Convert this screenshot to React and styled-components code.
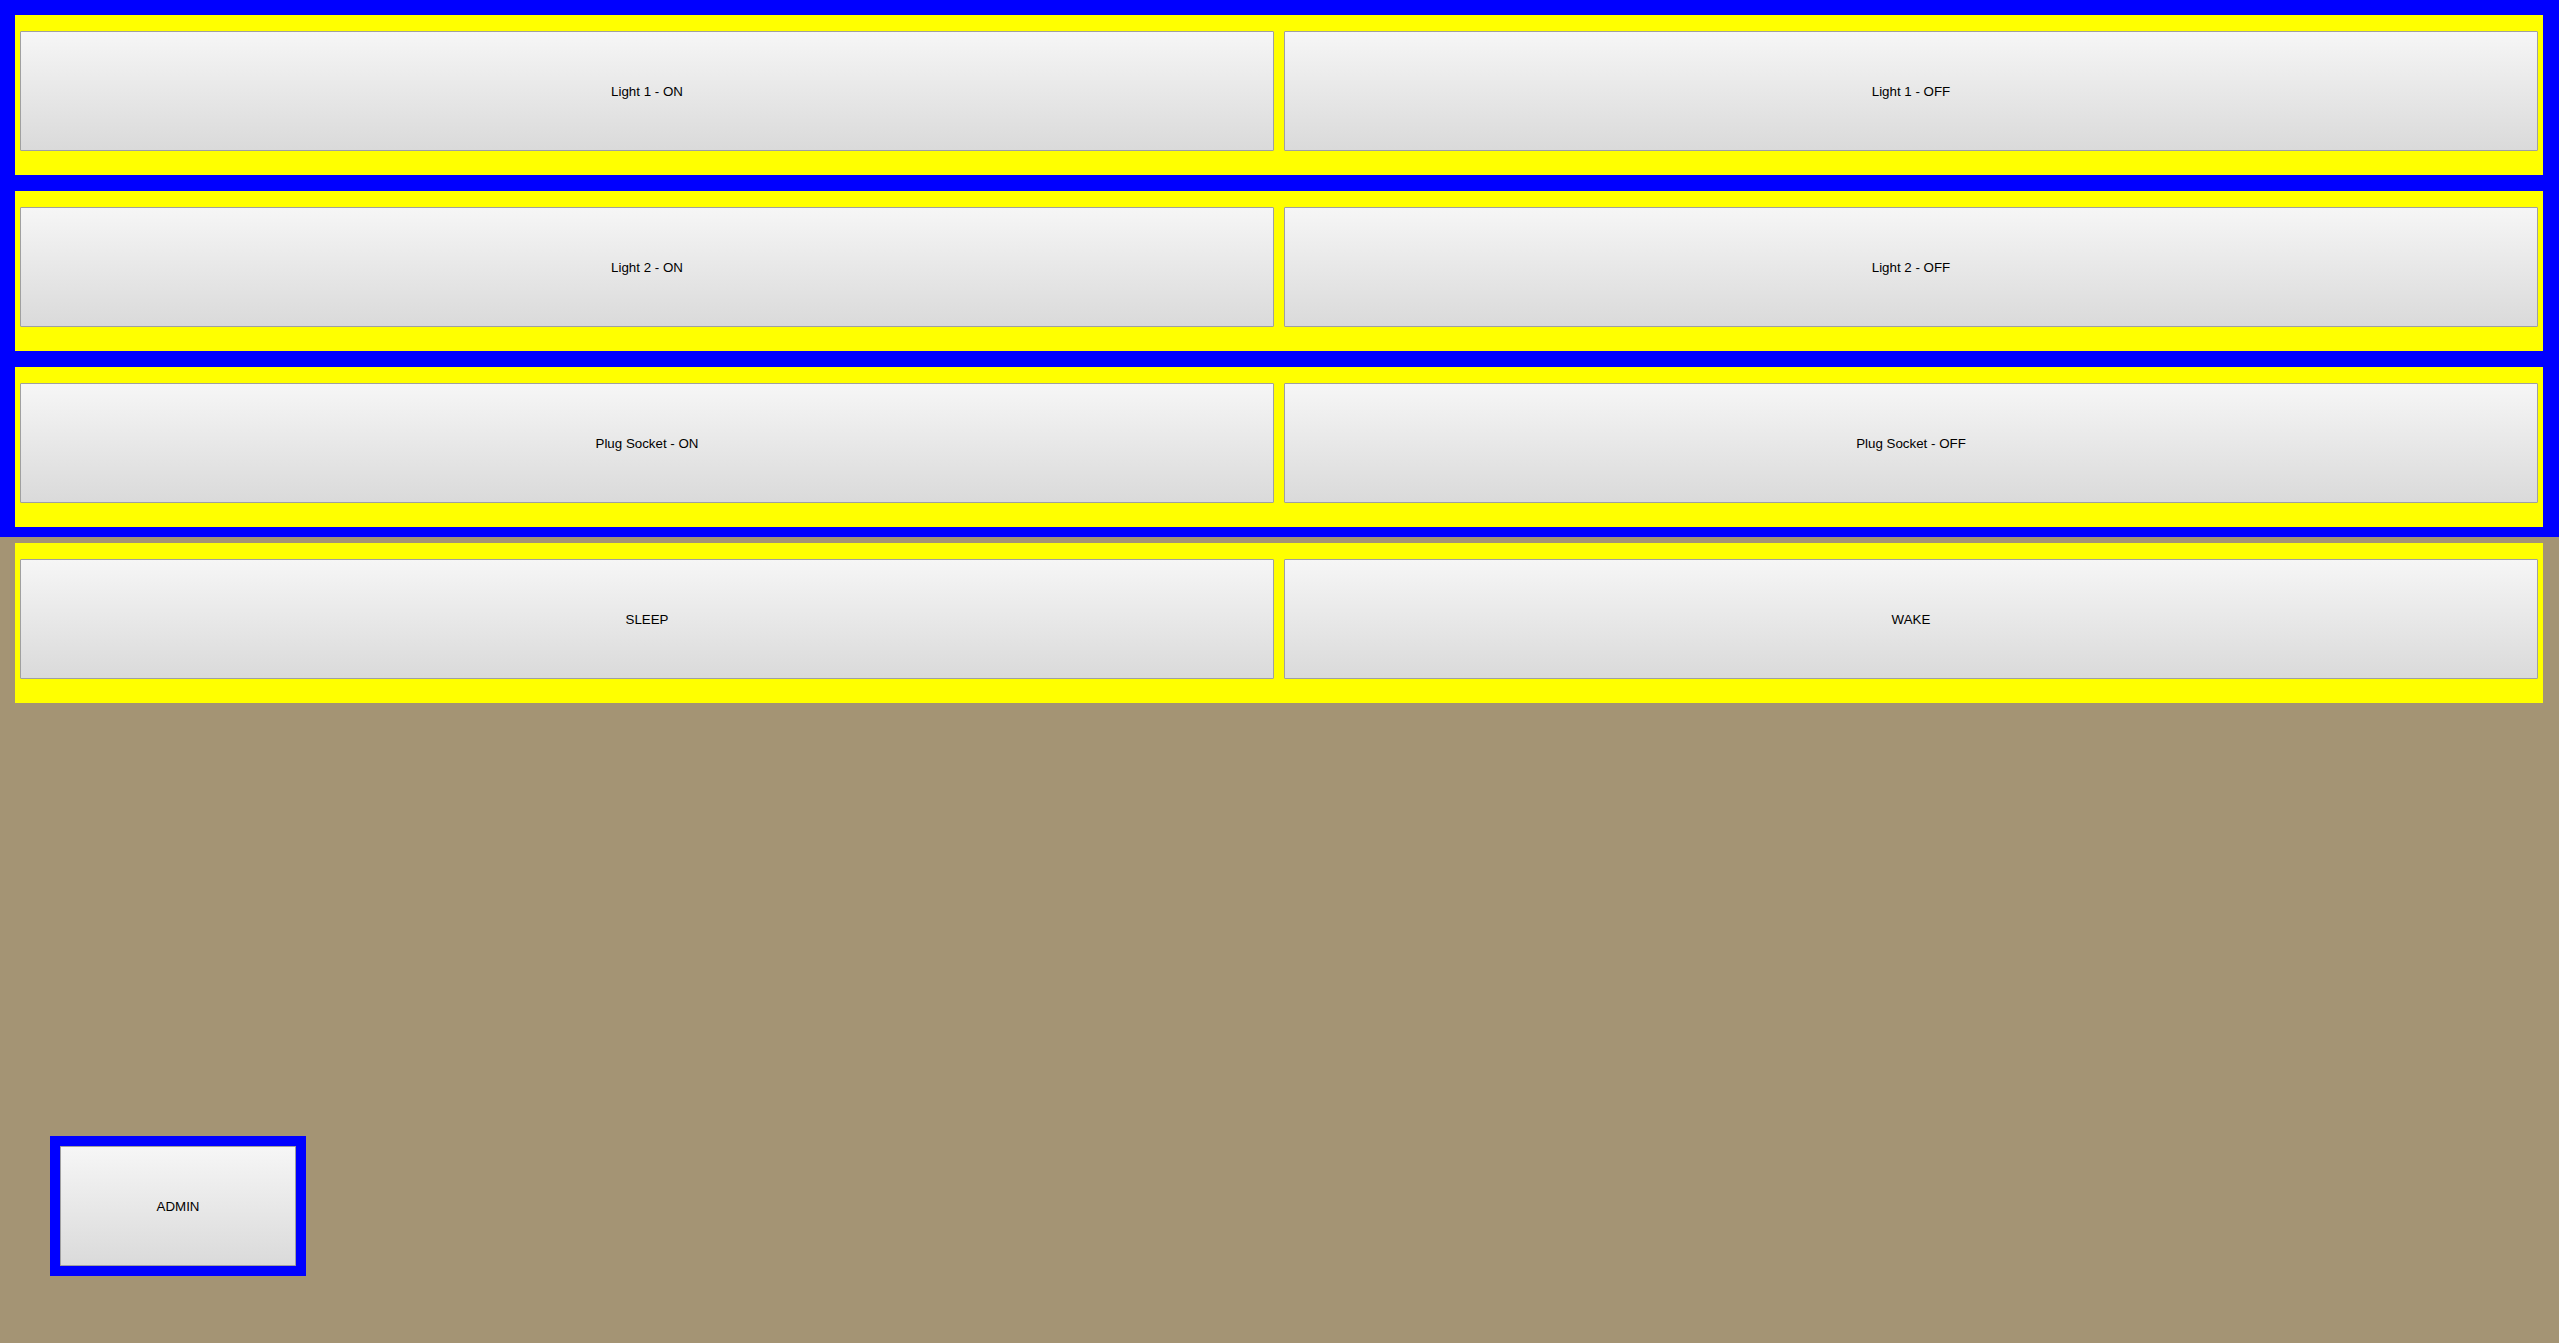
import React from "react";
import styled, { createGlobalStyle } from "styled-components";

const Global = createGlobalStyle`
  html, body {
    margin: 0;
    padding: 0;
    background: #a49474;
    height: 100%;
  }
  #root { min-height: 100%; }
`;

const Page = styled.div`
  display: flex;
  flex-direction: column;
  align-items: flex-start;
  width: 2559px;
  min-height: 1343px;
  background: #a49474;
`;

const BluePanel = styled.div`
  box-sizing: border-box;
  width: 100%;
  background: #0000ff;
  padding: 15px 16px 10px 15px;
  display: flex;
  flex-direction: column;
  gap: 16px;
`;

const Row = styled.div`
  box-sizing: border-box;
  width: 2528px;
  height: 160px;
  background: #ffff00;
  padding: 16px 5px 24px 5px;
  display: grid;
  grid-template-columns: 1fr 1fr;
  column-gap: 10px;
  margin: ${(p) => p.$margin || "0"};
`;

const Button = styled.button`
  box-sizing: border-box;
  height: 120px;
  width: ${(p) => p.$width || "auto"};
  margin: 0;
  padding: 0;
  border: 1px solid #a0a0a0;
  border-radius: 1px;
  background: linear-gradient(to bottom, #f6f6f6, #dadada);
  font-family: "Liberation Sans", Arial, sans-serif;
  font-size: 13.333px;
  color: #000;
  cursor: pointer;
`;

const AdminFrame = styled.div`
  box-sizing: border-box;
  display: flex;
  border: 10px solid #0000ff;
  margin: 433px 0 0 50px;
`;

const rows = [
  ["Light 1 - ON", "Light 1 - OFF"],
  ["Light 2 - ON", "Light 2 - OFF"],
  ["Plug Socket - ON", "Plug Socket - OFF"],
];

export default function App() {
  return (
    <>
      <Global />
      <Page>
        <BluePanel>
          {rows.map(([a, b]) => (
            <Row key={a}>
              <Button>{a}</Button>
              <Button>{b}</Button>
            </Row>
          ))}
        </BluePanel>
        <Row $margin="6px 0 0 15px">
          <Button>SLEEP</Button>
          <Button>WAKE</Button>
        </Row>
        <AdminFrame>
          <Button $width="236px">ADMIN</Button>
        </AdminFrame>
      </Page>
    </>
  );
}
